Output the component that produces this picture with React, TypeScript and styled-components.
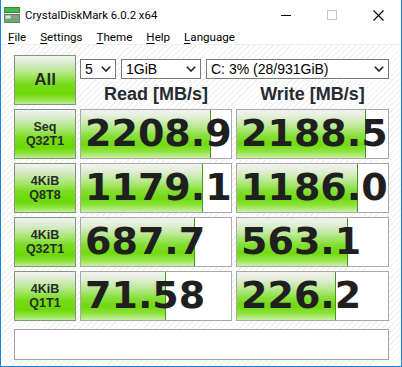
import React from "react";
import styled, { createGlobalStyle } from "styled-components";

const Global = createGlobalStyle`
  html, body { margin: 0; padding: 0; background: #ffffff; overflow: hidden; }
  * { box-sizing: border-box; }
`;

const Window = styled.div`
  width: 402px;
  height: 367px;
  display: flex;
  flex-direction: column;
  border: 1px solid #1883d7;
  border-top: none;
  background: #ffffff;
  position: relative;
  overflow: hidden;
`;

const TitleBar = styled.div`
  height: 30px;
  display: flex;
  align-items: center;
  padding-left: 3px;
  font-family: Roboto, "Liberation Sans", sans-serif;
  font-size: 11.4px;
  color: #000;
`;

const AppIcon = styled.svg`
  width: 16px;
  height: 16px;
  flex: none;
`;

const Title = styled.span`
  margin-left: 5px;
  flex: 1;
`;

const CtrlButton = styled.div`
  width: 46px;
  height: 30px;
  display: flex;
  align-items: center;
  justify-content: center;
  flex: none;
`;

const MenuBar = styled.div`
  height: 14px;
  display: flex;
  align-items: center;
  font-family: Roboto, "Liberation Sans", sans-serif;
  font-size: 11.6px;
  color: #000;
`;

const MenuItem = styled.span`
  padding: 0 7px;
  line-height: 14px;
`;

const Accel = styled.span`
  text-decoration: underline;
  text-underline-offset: 2px;
`;

const Client = styled.div`
  flex: 1;
  display: flex;
  flex-direction: column;
  padding: 10px 12px 7px 13px;
  border-top: 1px solid #f0f0f0;
  background-color: #ffffff;
  background-image: repeating-linear-gradient(
    135deg,
    #ffffff 0px,
    #ffffff 3px,
    #f1f1f1 3px,
    #f1f1f1 4.2px
  );
`;

const Grid = styled.div`
  display: grid;
  grid-template-columns: 62px 152px 153px;
  grid-template-rows: repeat(5, 50px);
  column-gap: 4px;
  row-gap: 4px;
`;

const GreenButton = styled.div<{ $big?: boolean }>`
  border: 1px solid #7f977f;
  background: linear-gradient(
    to bottom,
    #f2f4f0 0%,
    #dcebd2 14%,
    #ace779 38%,
    #78dc1c 58%,
    #6cd806 78%,
    #8ee23e 90%,
    #bdef94 100%
  );
  display: flex;
  flex-direction: column;
  align-items: center;
  justify-content: center;
  font-family: "Liberation Sans", Arial, sans-serif;
  font-weight: bold;
  color: #2a2a2a;
  font-size: ${(p) => (p.$big ? "17px" : "12.5px")};
  line-height: ${(p) => (p.$big ? "20px" : "14px")};
  text-align: center;
`;

const TopPanel = styled.div`
  grid-column: 2 / 4;
  display: flex;
  flex-direction: column;
`;

const SelectRow = styled.div`
  margin-top: 4px;
  display: flex;
  gap: 5px;
  height: 20px;
`;

const Select = styled.div<{ $w: number }>`
  width: ${(p) => p.$w}px;
  height: 20px;
  flex: none;
  border: 1px solid #7a7a7a;
  background: #ffffff;
  display: flex;
  align-items: center;
  justify-content: space-between;
  padding: 0 4px 0 4px;
  font-family: "Liberation Sans", Arial, sans-serif;
  font-size: 14px;
  color: #000;
`;

const Chevron = styled.svg`
  width: 10px;
  height: 6px;
  flex: none;
`;

const HeaderRow = styled.div`
  display: grid;
  grid-template-columns: 152px 153px;
  column-gap: 4px;
  padding-top: 5px;
`;

const Header = styled.div`
  text-align: center;
  font-family: "Liberation Sans", Arial, sans-serif;
  font-weight: bold;
  font-size: 18px;
  line-height: 20px;
  color: #262a31;
`;

const ValueCell = styled.div`
  border: 1px solid #a9a9a9;
  background: #ffffff;
  display: grid;
  grid-template-columns: 1fr;
  grid-template-rows: 1fr;
  overflow: hidden;
`;

const Bar = styled.div`
  grid-area: 1 / 1;
  justify-self: start;
  height: 100%;
  border-right: 1px solid #3e9a22;
  background: linear-gradient(
    to bottom,
    #f1f3ef 0%,
    #e6efdf 12%,
    #bbe994 34%,
    #86df36 55%,
    #70d90f 72%,
    #8ee33e 86%,
    #c8f2a4 100%
  );
`;

const Value = styled.div`
  grid-area: 1 / 1;
  align-self: center;
  padding-left: 4px;
  padding-bottom: 2px;
  font-family: "DejaVu Sans", Verdana, sans-serif;
  font-weight: bold;
  font-size: 38px;
  line-height: 46px;
  color: #1f1f1f;
  white-space: nowrap;
`;

const StatusBox = styled.div`
  margin-top: 8px;
  height: 31px;
  width: 375px;
  border: 1px solid #a3a3a3;
  background: #ffffff;
`;

type Row = {
  l1: string;
  l2: string;
  read: string;
  rw: number;
  write: string;
  ww: number;
};

const rows: Row[] = [
  { l1: "Seq", l2: "Q32T1", read: "2208.9", rw: 130, write: "2188.5", ww: 129 },
  { l1: "4KiB", l2: "Q8T8", read: "1179.1", rw: 122, write: "1186.0", ww: 121 },
  { l1: "4KiB", l2: "Q32T1", read: "687.7", rw: 114, write: "563.1", ww: 111 },
  { l1: "4KiB", l2: "Q1T1", read: "71.58", rw: 85, write: "226.2", ww: 99 },
];

const Down = () => (
  <Chevron viewBox="0 0 10 6">
    <polyline
      points="0.8,0.8 5,5 9.2,0.8"
      fill="none"
      stroke="#1b1f2e"
      strokeWidth="1.6"
    />
  </Chevron>
);

function Cell({ text, w }: { text: string; w: number }) {
  return (
    <ValueCell>
      <Bar style={{ width: `${w}px` }} />
      <Value>{text}</Value>
    </ValueCell>
  );
}

export default function App() {
  return (
    <>
      <Global />
      <Window>
        <TitleBar>
          <AppIcon viewBox="0 0 16 16">
            <rect x="0.5" y="0.5" width="15" height="5" fill="#45b94c" stroke="#2c8c36" />
            <rect x="0.5" y="7.5" width="15" height="8" fill="#8c9a8d" stroke="#6c7a6d" />
            <rect x="1.5" y="8.5" width="5" height="3" fill="#d8ead8" />
            <rect x="1.5" y="12" width="13" height="3" fill="#5fae62" />
          </AppIcon>
          <Title>CrystalDiskMark 6.0.2 x64</Title>
          <CtrlButton>
            <svg width="10" height="10" viewBox="0 0 10 10">
              <line x1="0" y1="5.5" x2="10" y2="5.5" stroke="#000" strokeWidth="1" />
            </svg>
          </CtrlButton>
          <CtrlButton>
            <svg width="10" height="10" viewBox="0 0 10 10">
              <rect x="0.5" y="0.5" width="9" height="9" fill="none" stroke="#c4c4c4" strokeWidth="1" />
            </svg>
          </CtrlButton>
          <CtrlButton>
            <svg width="11" height="11" viewBox="0 0 11 11">
              <line x1="0.5" y1="0.5" x2="10.5" y2="10.5" stroke="#000" strokeWidth="1.1" />
              <line x1="10.5" y1="0.5" x2="0.5" y2="10.5" stroke="#000" strokeWidth="1.1" />
            </svg>
          </CtrlButton>
        </TitleBar>
        <MenuBar>
          <MenuItem><Accel>F</Accel>ile</MenuItem>
          <MenuItem><Accel>S</Accel>ettings</MenuItem>
          <MenuItem><Accel>T</Accel>heme</MenuItem>
          <MenuItem><Accel>H</Accel>elp</MenuItem>
          <MenuItem><Accel>L</Accel>anguage</MenuItem>
        </MenuBar>
        <Client>
          <Grid>
            <GreenButton $big>All</GreenButton>
            <TopPanel>
              <SelectRow>
                <Select $w={36}>
                  <span>5</span>
                  <Down />
                </Select>
                <Select $w={80}>
                  <span>1GiB</span>
                  <Down />
                </Select>
                <Select $w={183}>
                  <span>C: 3% (28/931GiB)</span>
                  <Down />
                </Select>
              </SelectRow>
              <HeaderRow>
                <Header>Read [MB/s]</Header>
                <Header>Write [MB/s]</Header>
              </HeaderRow>
            </TopPanel>
            {rows.map((r, i) => (
              <React.Fragment key={i}>
                <GreenButton>
                  <span>{r.l1}</span>
                  <span>{r.l2}</span>
                </GreenButton>
                <Cell text={r.read} w={r.rw} />
                <Cell text={r.write} w={r.ww} />
              </React.Fragment>
            ))}
          </Grid>
          <StatusBox />
        </Client>
      </Window>
    </>
  );
}
